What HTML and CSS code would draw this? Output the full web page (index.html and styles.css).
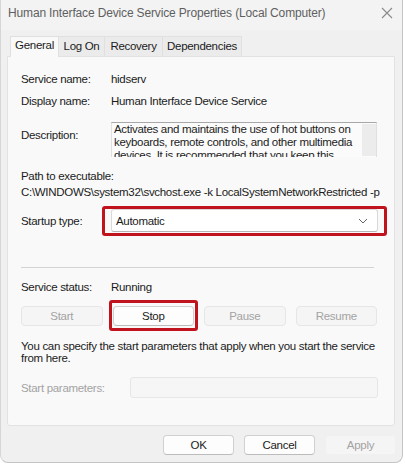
FILE: index.html
```html
<!DOCTYPE html>
<html>
<head>
<meta charset="utf-8">
<link rel="stylesheet" href="styles.css">
</head>
<body>
<div class="window">
  <div class="titlebar">
    <span class="title">Human Interface Device Service Properties (Local Computer)</span>
    <svg class="close" width="12" height="12" viewBox="0 0 12 12"><path d="M1 1L11 11M11 1L1 11" stroke="#8a8a8a" stroke-width="1.1" fill="none"/></svg>
  </div>
  <div class="tabs">
    <div class="tab active">General</div>
    <div class="tab">Log On</div>
    <div class="tab">Recovery</div>
    <div class="tab">Dependencies</div>
  </div>
  <div class="panel">
    <div class="row r1"><span class="label">Service name:</span><span>hidserv</span></div>
    <div class="row r2"><span class="label">Display name:</span><span>Human Interface Device Service</span></div>
    <div class="row desc-row">
      <span class="label desc-label">Description:</span>
      <div class="desc-box">
        <div class="desc-text">Activates and maintains the use of hot buttons on keyboards, remote controls, and other multimedia devices. It is recommended that you keep this service running.</div>
        <div class="scroll"></div>
      </div>
    </div>
    <div class="path-label">Path to executable:</div>
    <div class="path-value">C:\WINDOWS\system32\svchost.exe -k LocalSystemNetworkRestricted -p</div>
    <div class="row startup-row">
      <span class="label">Startup type:</span>
      <div class="combo highlight-combo">
        <span>Automatic</span>
        <svg class="chev" width="10" height="6" viewBox="0 0 10 6"><path d="M1 1L5 5L9 1" stroke="#666" stroke-width="1" fill="none"/></svg>
      </div>
    </div>
    <div class="sep"></div>
    <div class="row status-row"><span class="label">Service status:</span><span>Running</span></div>
    <div class="svc-buttons">
      <div class="btn disabled">Start</div>
      <div class="btn stop">Stop</div>
      <div class="btn disabled">Pause</div>
      <div class="btn disabled">Resume</div>
    </div>
    <div class="info">You can specify the start parameters that apply when you start the service from here.</div>
    <div class="row params-row">
      <span class="label params-label">Start parameters:</span>
      <div class="params-input"></div>
    </div>
  </div>
  <div class="footer">
    <div class="btn fbtn">OK</div>
    <div class="btn fbtn">Cancel</div>
    <div class="btn fbtn apply">Apply</div>
  </div>
</div>
</body>
</html>
```
FILE: styles.css
```css
* { box-sizing: border-box; }
html, body { margin: 0; padding: 0; background: #ffffff; }
body {
  font-family: "Liberation Sans", Arial, sans-serif;
  font-size: 11.5px;
  letter-spacing: -0.3px;
  color: #1b1b1b;
}
.window {
  width: 403px;
  height: 463px;
  background: #f0f0f0;
  border-right: 1px solid #c4c4c4;
  border-bottom: 1px solid #c4c4c4;
  border-left: 1px solid #d6d6d6;
  border-radius: 0 0 8px 8px;
  overflow: hidden;
}
.titlebar {
  height: 30px;
  background: #f3f3f3;
  display: flex;
  align-items: center;
  justify-content: space-between;
  padding: 0 9px 4px 7px;
}
.title {
  font-size: 12px;
  letter-spacing: -0.15px;
  color: #5f5f5f;
}
.tabs {
  display: flex;
  padding-left: 9px;
  height: 26px;
  align-items: flex-end;
}
.tab {
  height: 20px;
  line-height: 19px;
  text-align: center;
  white-space: nowrap;
  background: #ebebeb;
  border: 1px solid #e0e0e0;
  border-bottom: none;
  border-left: none;
  color: #1b1b1b;
}
.tab:nth-child(2) { width: 46px; }
.tab:nth-child(3) { width: 58px; }
.tab:nth-child(4) { width: 79px; }
.tab.active {
  width: 49px;
  height: 21px;
  line-height: 17px;
  background: #f9f9f9;
  border-left: 1px solid #e0e0e0;
  position: relative;
  z-index: 1;
  margin-bottom: -1px;
}
.panel {
  margin: 0 7px 0 6px;
  height: 370px;
  background: #f9f9f9;
  border: 1px solid #e2e2e2;
  border-radius: 0 0 3px 3px;
  padding: 15px 0 0 13px;
}
.row {
  display: flex;
  align-items: flex-start;
  line-height: 14px;
  white-space: nowrap;
}
.label { width: 90px; flex: none; }
.r2 { margin-top: 8px; }
.desc-row { margin-top: 14px; }
.desc-label { padding-top: 6px; }
.desc-box {
  width: 266px;
  height: 35px;
  display: flex;
  border-top: 1px solid #a8a8a8;
  border-left: 1px solid #e0e0e0;
  border-right: 1px solid #e0e0e0;
  background: #fbfbfb;
  overflow: hidden;
  white-space: normal;
}
.desc-text {
  flex: 1;
  padding: 0 4px 0 2px;
  line-height: 13px;
}
.scroll {
  width: 14px;
  margin: 1px 0;
  background: #ececec;
  flex: none;
}
.path-label { margin-top: 12px; line-height: 14px; }
.path-value { margin-top: 2px; line-height: 14px; white-space: nowrap; }
.startup-row { margin-top: 10px; align-items: center; }
.combo {
  width: 267px;
  height: 23px;
  background: #ffffff;
  border: 1px solid #d9d9d9;
  border-bottom-color: #b5b5b5;
  border-radius: 3px;
  display: flex;
  align-items: center;
  justify-content: space-between;
  padding: 0 9px 0 4px;
}
.highlight-combo, .stop { position: relative; }
.highlight-combo::after {
  content: "";
  position: absolute;
  left: -10px; right: -10px; top: -4px; bottom: -5px;
  border: 3px solid #c0131d;
  border-radius: 3px;
}
.sep {
  margin-top: 35px;
  width: 353px;
  height: 1px;
  background: #d4d4d4;
}
.status-row { margin-top: 12px; }
.svc-buttons {
  margin-top: 12px;
  width: 356px;
  display: grid;
  grid-template-columns: repeat(4, 1fr);
  gap: 10px;
}
.btn {
  height: 20px;
  line-height: 18px;
  text-align: center;
  background: #fdfdfd;
  border: 1px solid #d0d0d0;
  border-bottom-color: #bcbcbc;
  border-radius: 4px;
}
.btn.disabled {
  background: #f5f5f5;
  border-color: #e6e6e6;
  color: #a3a3a3;
}
.stop::after {
  content: "";
  position: absolute;
  left: -5px; right: -5px; top: -7px; bottom: -6px;
  border: 3px solid #c0131d;
  border-radius: 3px;
}
.info {
  margin-top: 14px;
  line-height: 12px;
  width: 362px;
}
.params-row { margin-top: 13px; align-items: center; }
.params-label { width: 109px; color: #a3a3a3; }
.params-input {
  width: 248px;
  height: 21px;
  background: #f6f6f6;
  border: 1px solid #e6e6e6;
  border-radius: 3px;
}
.footer {
  display: flex;
  justify-content: flex-end;
  gap: 10px;
  padding: 9px 6px 0 0;
}
.fbtn { width: 71px; }
.apply {
  background: #f5f5f5;
  border-color: #f0f0f0;
  color: #a3a3a3;
}
```
